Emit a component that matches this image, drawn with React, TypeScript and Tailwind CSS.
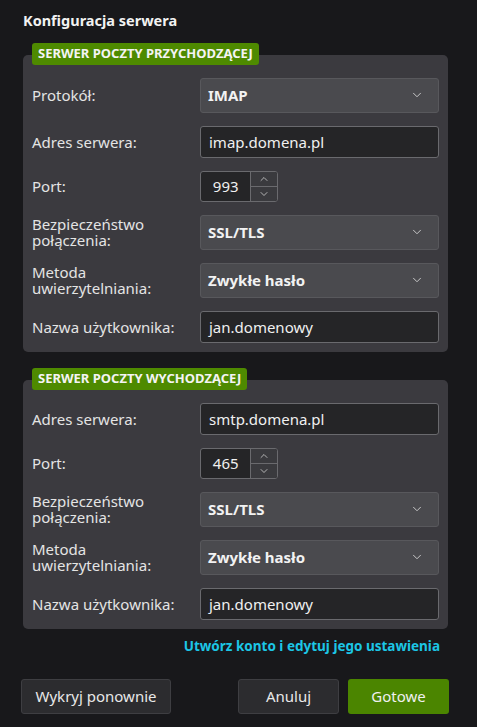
import { ChevronDown, ChevronUp } from "lucide-react";

type Row =
  | { kind: "select"; label: string[]; value: string }
  | { kind: "input"; label: string[]; value: string }
  | { kind: "port"; label: string[]; value: string };

const INCOMING: Row[] = [
  { kind: "select", label: ["Protokół:"], value: "IMAP" },
  { kind: "input", label: ["Adres serwera:"], value: "imap.domena.pl" },
  { kind: "port", label: ["Port:"], value: "993" },
  { kind: "select", label: ["Bezpieczeństwo", "połączenia:"], value: "SSL/TLS" },
  { kind: "select", label: ["Metoda", "uwierzytelniania:"], value: "Zwykłe hasło" },
  { kind: "input", label: ["Nazwa użytkownika:"], value: "jan.domenowy" },
];

const OUTGOING: Row[] = [
  { kind: "input", label: ["Adres serwera:"], value: "smtp.domena.pl" },
  { kind: "port", label: ["Port:"], value: "465" },
  { kind: "select", label: ["Bezpieczeństwo", "połączenia:"], value: "SSL/TLS" },
  { kind: "select", label: ["Metoda", "uwierzytelniania:"], value: "Zwykłe hasło" },
  { kind: "input", label: ["Nazwa użytkownika:"], value: "jan.domenowy" },
];

function Control({ row }: { row: Row }) {
  if (row.kind === "select") {
    return (
      <div className="flex h-[35px] w-[239px] items-center justify-between rounded-[3px] border border-[#58585c] bg-[#4a4a4e] pl-[7px] pr-[14px] text-[15px] font-bold text-[#f2f2f2]">
        <span>{row.value}</span>
        <ChevronDown size={14} strokeWidth={1.6} className="text-[#d0d0d0]" />
      </div>
    );
  }
  if (row.kind === "port") {
    return (
      <div className="flex h-[31px] w-[78px] overflow-hidden rounded-[3px] border border-[#6a6a6e] bg-[#252527]">
        <div className="flex w-[50px] items-center justify-center text-[15px] text-[#f0f0f0]">{row.value}</div>
        <div className="flex w-[27px] flex-col border-l border-[#6a6a6e] bg-[#3a3a3e]">
          <div className="flex flex-1 items-center justify-center border-b border-[#6a6a6e]">
            <ChevronUp size={12} strokeWidth={1.6} className="text-[#d0d0d0]" />
          </div>
          <div className="flex flex-1 items-center justify-center">
            <ChevronDown size={12} strokeWidth={1.6} className="text-[#d0d0d0]" />
          </div>
        </div>
      </div>
    );
  }
  return (
    <div className="flex h-[32px] w-[239px] items-center rounded-[3px] border border-[#6a6a6e] bg-[#252527] px-[8px] text-[15px] text-[#f0f0f0]">
      {row.value}
    </div>
  );
}

function Section({ title, rows }: { title: string; rows: Row[] }) {
  return (
    <div className="flex flex-col">
      <div className="relative z-10 ml-[9px] flex h-[22px] w-fit items-center rounded-[3px] bg-[#4e8a00] px-[6px] text-[13px] font-bold text-[#f4f4f4]">
        {title}
      </div>
      <div className="-mt-[10px] flex flex-col gap-[13px] rounded-[5px] bg-[#3b3a3f] pb-[9px] pl-[9px] pr-[9px] pt-[23px]">
        {rows.map((r, i) => (
          <div key={i} className="flex items-center">
            <p className="w-[168px] text-[15px] leading-[16px] text-[#e4e4e4]">
              {r.label[0]}
              {r.label[1] && (
                <>
                  <br />
                  {r.label[1]}
                </>
              )}
            </p>
            <Control row={r} />
          </div>
        ))}
      </div>
    </div>
  );
}

export default function App() {
  return (
    <div
      className="flex h-[727px] w-[477px] flex-col bg-[#18181b] px-[23px] pt-[10px]"
      style={{ fontFamily: '"Noto Sans", "Open Sans", sans-serif' }}
    >
      <h1 className="text-[14.5px] font-bold text-[#f2f2f2]">Konfiguracja serwera</h1>
      <div className="mt-[11px] flex w-[425px] flex-col gap-[16px]">
        <Section title="SERWER POCZTY PRZYCHODZĄCEJ" rows={INCOMING} />
        <Section title="SERWER POCZTY WYCHODZĄCEJ" rows={OUTGOING} />
      </div>
      <div className="mt-[7px] w-[417px] text-right text-[13.5px] font-bold text-[#1cc6e6]">
        Utwórz konto i edytuj jego ustawienia
      </div>
      <div className="mt-[23px] -ml-[2px] flex w-[428px] items-center">
        <button className="h-[35px] w-[150px] rounded-[3px] border border-[#3e3e42] bg-[#2c2c2f] text-[15px] text-[#e8e8e8]">
          Wykryj ponownie
        </button>
        <div className="flex-1" />
        <button className="h-[35px] w-[101px] rounded-[3px] border border-[#3e3e42] bg-[#2c2c2f] text-[15px] text-[#e8e8e8]">
          Anuluj
        </button>
        <button className="ml-[9px] h-[35px] w-[101px] rounded-[3px] bg-[#4b8500] text-[15px] text-[#f0f0f0]">
          Gotowe
        </button>
      </div>
    </div>
  );
}
